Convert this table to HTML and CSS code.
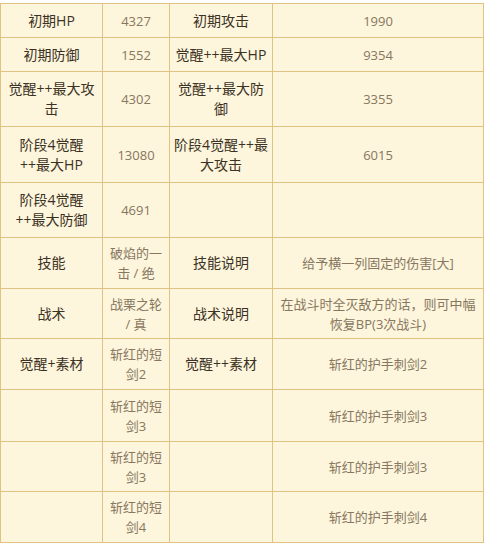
FILE: index.html
```html
<!DOCTYPE html>
<html lang="zh">
<head>
<meta charset="utf-8">
<title>角色数据</title>
<link rel="stylesheet" href="styles.css">
</head>
<body>
<div class="sheet">
  <div class="c k">初期HP</div><div class="c v">4327</div><div class="c k">初期攻击</div><div class="c v">1990</div>
  <div class="c k">初期防御</div><div class="c v">1552</div><div class="c k">觉醒++最大HP</div><div class="c v">9354</div>
  <div class="c k">觉醒++最大攻<br>击</div><div class="c v">4302</div><div class="c k">觉醒++最大防<br>御</div><div class="c v">3355</div>
  <div class="c k">阶段4觉醒<br>++最大HP</div><div class="c v">13080</div><div class="c k">阶段4觉醒++最<br>大攻击</div><div class="c v">6015</div>
  <div class="c k">阶段4觉醒<br>++最大防御</div><div class="c v">4691</div><div class="c k"></div><div class="c v"></div>
  <div class="c k">技能</div><div class="c v">破焰的一<br>击 / 绝</div><div class="c k">技能说明</div><div class="c v">给予横一列固定的伤害[大]</div>
  <div class="c k">战术</div><div class="c v">战栗之轮<br>/ 真</div><div class="c k">战术说明</div><div class="c v">在战斗时全灭敌方的话，则可中幅<br>恢复BP(3次战斗)</div>
  <div class="c k">觉醒+素材</div><div class="c v">斩红的短<br>剑2</div><div class="c k">觉醒++素材</div><div class="c v">斩红的护手刺剑2</div>
  <div class="c k"></div><div class="c v">斩红的短<br>剑3</div><div class="c k"></div><div class="c v">斩红的护手刺剑3</div>
  <div class="c k"></div><div class="c v">斩红的短<br>剑3</div><div class="c k"></div><div class="c v">斩红的护手刺剑3</div>
  <div class="c k"></div><div class="c v">斩红的短<br>剑4</div><div class="c k"></div><div class="c v">斩红的护手刺剑4</div>
</div>
</body>
</html>
```

FILE: styles.css
```css
html, body {
  margin: 0;
  padding: 0;
  background: #ffffff;
}

body {
  padding-top: 3px;
  font-family: "Open Sans", "Noto Sans CJK SC", "Microsoft YaHei", sans-serif;
}

.sheet {
  width: 484px;
  box-sizing: border-box;
  display: grid;
  grid-template-columns: 101px 66px 102px 210px;
  grid-template-rows: 33px 33px 54px 55px 54px 50px 49px 50px 51px 49px 50px;
  gap: 1px;
  padding: 1px;
  background: #e0c283;
}

.c {
  background: #fdf5dc;
  display: flex;
  align-items: center;
  justify-content: center;
  text-align: center;
  white-space: nowrap;
  line-height: 20px;
}

.k {
  font-size: 14px;
  color: #3b3224;
}

.v {
  font-size: 13px;
  color: #877760;
}
```
